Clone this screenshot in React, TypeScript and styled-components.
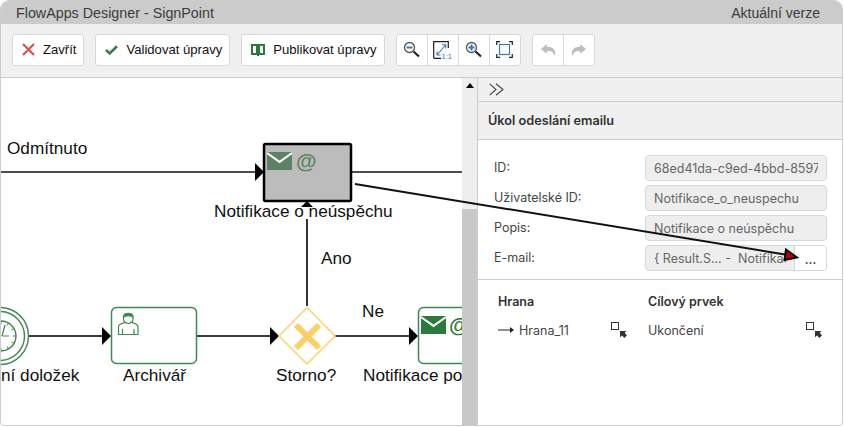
import * as React from 'react';
import styled, { createGlobalStyle } from 'styled-components';

const UI_FONT = '"Liberation Sans", Arial, sans-serif';
const PANEL_FONT = 'Inter, "Liberation Sans", sans-serif';
const GREEN = '#2a7a3b';
const BORDER = '#cdcdcd';

const GlobalStyle = createGlobalStyle`
  html, body { margin: 0; padding: 0; background: #fff; }
  body { font-family: ${UI_FONT}; overflow: hidden; }
`;

const Window = styled.div`
  position: relative;
  box-sizing: border-box;
  display: flex;
  flex-direction: column;
  width: 843px;
  height: 426px;
  border: 1px solid ${BORDER};
  border-radius: 9px 9px 4px 4px;
  overflow: hidden;
  background: #fff;
`;

const TitleBar = styled.div`
  display: flex;
  align-items: center;
  justify-content: space-between;
  flex: none;
  height: 23px;
  padding: 0 22px 0 15px;
  background: #cbcbcb;
  color: #3c3c3c;
  font-size: 14px;
`;

const AppName = styled.span`
  font-size: 14.3px;
`;

const Toolbar = styled.div`
  display: flex;
  align-items: center;
  gap: 11px;
  flex: none;
  box-sizing: border-box;
  height: 54px;
  padding: 0 0 2px 11px;
  background: #f0f0f0;
  border-bottom: 1px solid ${BORDER};
`;

const Button = styled.button`
  display: flex;
  align-items: center;
  gap: 8px;
  box-sizing: border-box;
  height: 32px;
  padding: 0 7px 0 9px;
  background: #fff;
  border: 1px solid #d8d8d8;
  border-radius: 3px;
  color: #111;
  font-family: ${UI_FONT};
  font-size: 13.1px;
`;

const Group = styled.div`
  display: flex;
  box-sizing: border-box;
  height: 32px;
  background: #fff;
  border: 1px solid #d8d8d8;
  border-radius: 3px;
`;

const GroupButton = styled.button`
  display: flex;
  align-items: center;
  justify-content: center;
  box-sizing: border-box;
  width: 31px;
  padding: 0;
  background: none;
  border: none;
  border-left: 1px solid #d8d8d8;

  &:first-child {
    width: 30px;
    border-left: none;
  }
`;

const Body = styled.div`
  display: flex;
  flex: 1;
  min-height: 0;
`;

const Canvas = styled.div`
  flex: none;
  width: 461px;
  overflow: hidden;
`;

const Scrollbar = styled.div`
  flex: none;
  display: flex;
  flex-direction: column;
  width: 15px;
  background: #eeeeee;
`;

const ScrollArrow = styled.div`
  align-self: center;
  margin-top: 5px;
  width: 0;
  height: 0;
  border-left: 4px solid transparent;
  border-right: 4px solid transparent;
  border-bottom: 5px solid #000;
`;

const ScrollThumb = styled.div`
  margin-top: auto;
  height: 216px;
  background: #c8c8c8;
`;

const Panel = styled.div`
  flex: 1;
  min-width: 0;
  border-left: 1px solid ${BORDER};
  color: #333;
  font-family: ${PANEL_FONT};
  font-size: 12.5px;
`;

const CollapseRow = styled.div`
  display: flex;
  align-items: center;
  box-sizing: border-box;
  height: 24px;
  padding-left: 11px;
  background: #f0f0f0;
  border-bottom: 1px solid ${BORDER};
`;

const PanelHeading = styled.div`
  display: flex;
  align-items: center;
  box-sizing: border-box;
  height: 38px;
  padding-left: 10px;
  background: #f0f0f0;
  border-bottom: 1px solid ${BORDER};
  font-size: 12.7px;
  font-weight: 600;
`;

const Form = styled.div`
  display: grid;
  grid-template-columns: 151px 182px;
  row-gap: 4px;
  padding: 15px 0 8px 16px;
  border-bottom: 1px solid ${BORDER};
`;

const FieldLabel = styled.div`
  align-self: center;
  margin-top: -2px;
  color: #444;
`;

const Field = styled.div`
  display: flex;
  align-items: center;
  box-sizing: border-box;
  height: 26px;
  padding-left: 8px;
  background: #eeeeee;
  border: 1px solid #d8d8d8;
  border-radius: 4px;
  color: #666;
  white-space: pre;
  overflow: hidden;
`;

const FieldText = styled.span`
  flex: 1;
  min-width: 0;
  margin-right: 8px;
  overflow: hidden;
`;

const PickButton = styled.span`
  flex: none;
  display: flex;
  align-items: center;
  justify-content: center;
  box-sizing: border-box;
  width: 32px;
  height: 100%;
  padding-top: 3px;
  background: #fff;
  border-left: 1px solid #d8d8d8;
  color: #222;
  font-weight: 600;
  font-size: 12px;
`;

const EdgeTable = styled.div`
  display: grid;
  grid-template-columns: 113px 37px 158px 16px;
  padding: 14px 0 0 20px;
`;

const HeadCell = styled.div`
  font-weight: 600;
  height: 28px;
  grid-column: span ${(props: { $span?: number }) => props.$span || 1};
`;

const Cell = styled.div`
  display: flex;
  align-items: center;
  gap: 5px;
  height: 16px;
  color: #444;
`;

const LineLayer = styled.svg`
  position: absolute;
  left: -1px;
  top: -1px;
  pointer-events: none;
`;

const DiagramText = styled.text`
  font-family: ${UI_FONT};
  font-size: 17.2px;
  fill: #111;
`;

const CloseIcon = () => (
  <svg width="13" height="13" viewBox="0 0 13 13">
    <path d="M1 1 L12 12 M12 1 L1 12" stroke="#d9534f" strokeWidth="2.2" fill="none" />
  </svg>
);

const CheckIcon = () => (
  <svg width="13" height="10" viewBox="0 0 13 10">
    <path d="M1 5 L4.7 8.4 L12 1.3" stroke="#3b7d52" strokeWidth="2.6" fill="none" />
  </svg>
);

const BookIcon = () => (
  <svg width="14" height="12" viewBox="0 0 14 12">
    <path d="M1 1 H6 V10 H1 Z M8 1 H13 V10 H8 Z" stroke="#2a7a3b" strokeWidth="2" fill="none" />
    <path d="M6 10 H8 V12 H6 Z" fill="#2a7a3b" />
  </svg>
);

const Magnifier = ({ plus }: { plus?: boolean }) => (
  <svg width="17" height="17" viewBox="0 0 17 17">
    <circle cx="6.5" cy="6.5" r="5" fill="#fff" stroke="#555" strokeWidth="1.3" />
    <path d="M10.5 10.5 L16 15.5" stroke="#222" strokeWidth="2.2" />
    <path d="M3.5 6.5 H9.5" stroke="#3a76b8" strokeWidth="2" />
    {plus && <path d="M6.5 3.5 V9.5" stroke="#3a76b8" strokeWidth="2" />}
  </svg>
);

const ActualSizeIcon = () => (
  <svg width="19" height="18" viewBox="0 0 19 18">
    <path d="M0.7 17.3 V0.7 H15.3 V7 M0.7 17.3 H8" stroke="#222" strokeWidth="1.2" fill="none" />
    <path d="M4 14 L12.5 4 M9 3.8 H12.8 V7.6 M4 10.5 V14 H7.5" stroke="#3a76b8" strokeWidth="1.1" fill="none" />
    <text x="8.5" y="17.5" fontFamily={UI_FONT} fontSize="7.5" fill="#3a76b8">1:1</text>
  </svg>
);

const FitIcon = () => (
  <svg width="17" height="17" viewBox="0 0 17 17">
    <path d="M0.7 4 V0.7 H4 M13 0.7 H16.3 V4 M16.3 13 V16.3 H13 M4 16.3 H0.7 V13" stroke="#222" strokeWidth="1.2" fill="none" />
    <rect x="3.5" y="3.5" width="10" height="10" stroke="#3a76b8" strokeWidth="1.2" fill="none" />
  </svg>
);

const UndoIcon = ({ flip }: { flip?: boolean }) => (
  <svg width="16" height="12" viewBox="0 0 16 12" style={flip ? { transform: 'scaleX(-1)' } : undefined}>
    <path d="M6.5 1 L1.5 5 L6.5 9 V6.5 H9 C12 6.5 13.5 8 14.5 11 C15.5 6.5 13 3.5 9 3.5 H6.5 Z" fill="#bdbdbd" stroke="#bdbdbd" />
  </svg>
);

const CollapseIcon = () => (
  <svg width="15" height="13" viewBox="0 0 15 13">
    <path d="M0.7 0.8 L7 6.5 L0.7 12.2 M7 0.8 L14 6.5 L7 12.2" stroke="#444" strokeWidth="1.1" fill="none" />
  </svg>
);

const LinkIcon = () => (
  <svg width="16" height="16" viewBox="0 0 16 16">
    <rect x="0.5" y="0.5" width="7" height="7" fill="#fff" stroke="#333" strokeWidth="1" />
    <path d="M9 9 H15.5 L13.7 10.8 L16 13.2 L13.4 16 L11 13.5 L9 15.3 Z" fill="#333" />
  </svg>
);

const SmallArrow = () => (
  <svg width="16" height="8" viewBox="0 0 16 8">
    <path d="M0 4 H13" stroke="#222" strokeWidth="1" />
    <path d="M12 1 L16 4 L12 7 Z" fill="#222" />
  </svg>
);

const Envelope = ({ x, y, w, h, color }: { x: number; y: number; w: number; h: number; color: string }) => (
  <g>
    <rect x={x} y={y} width={w} height={h} fill={color} />
    <path d={`M${x} ${y + 1} L${x + w / 2} ${y + h * 0.55} L${x + w} ${y + 1}`} stroke="#fff" strokeWidth="2" fill="none" />
  </g>
);

const Head = ({ x, y }: { x: number; y: number }) => (
  <path d={`M${x - 9} ${y - 9} L${x} ${y} L${x - 9} ${y + 9} Z`} fill="#000" />
);

const ticks = Array.from({ length: 12 }, (_, i) => (i * Math.PI) / 6);

const Diagram = () => (
  <svg width="461" height="347" viewBox="1 78 461 347" style={{ display: 'block' }}>
    <DiagramText x="7" y="154">Odmítnuto</DiagramText>
    <path d="M1 172 H256" stroke="#111" strokeWidth="1.5" />
    <path d="M351 172 H462" stroke="#111" strokeWidth="1.5" />
    <Head x={264} y={172} />
    <rect x="264" y="144" width="87" height="57" rx="1.5" fill="#bcbcbc" stroke="#000" strokeWidth="2.5" />
    <Envelope x={267} y={152} w={25} h={18} color="#5b8263" />
    <text x="296" y="168" fontFamily={UI_FONT} fontSize="21" fontWeight="700" fill="#5b8263">@</text>

    <path d="M307 306 V206" stroke="#333" strokeWidth="2" />
    <path d="M298 210 L307 201 L316 210 Z" fill="#000" />
    <rect x="214" y="207" width="180" height="12" fill="#fff" />
    <DiagramText x="214" y="217">Notifikace o neúspěchu</DiagramText>
    <DiagramText x="321" y="264">Ano</DiagramText>
    <DiagramText x="362" y="317">Ne</DiagramText>

    <path d="M29 336 H103 M197 336 H271 M335 336 H409" stroke="#3c3c3c" strokeWidth="2" />
    <Head x={111} y={336} />
    <Head x={279} y={336} />
    <Head x={418} y={336} />

    <g fill="none" stroke={GREEN} strokeOpacity="0.9">
      <circle cx="0" cy="336" r="28.5" strokeWidth="1.4" />
      <circle cx="0" cy="336" r="24.5" strokeWidth="1.4" />
      <circle cx="1" cy="336" r="15" strokeWidth="1.4" />
      {ticks.map((a) => (
        <path key={a} d={`M${1 + Math.cos(a) * 12} ${336 + Math.sin(a) * 12} L${1 + Math.cos(a) * 15} ${336 + Math.sin(a) * 15}`} strokeWidth="1" />
      ))}
      <path d="M2 336 H9 M2 336 L5 325" strokeWidth="1.2" />
    </g>
    <DiagramText x="1" y="381">ní doložek</DiagramText>

    <rect x="111.5" y="307.5" width="85" height="56" rx="5" fill="#fff" stroke="#3b8a52" strokeWidth="1.5" />
    <g fill="none" stroke="#3b8a52" strokeWidth="1.2">
      <path d="M118.5 334.5 V327 C118.5 324 122 323.5 125 322.5 H132 C135 323.5 138 324 138 327 V334.5 Z" fill="#fff" />
      <path d="M122.5 329 V334 M134 329 V334" />
      <ellipse cx="128.3" cy="318.5" rx="4.8" ry="5" fill="#fff" />
      <path d="M123.5 317 C123.5 312 133 312 133 317 C130 315.5 126 315.5 123.5 317 Z" fill="#3b8a52" />
    </g>
    <DiagramText x="123" y="381">Archivář</DiagramText>

    <path d="M307 307.5 L335 336 L307 364 L279 336 Z" fill="#fff" stroke="#fdd26f" strokeWidth="1.5" />
    <path d="M296 325 L319 348 M319 325 L296 348" stroke="#fbcf66" strokeWidth="6" />
    <DiagramText x="276" y="381">Storno?</DiagramText>

    <rect x="418.5" y="307.5" width="85" height="56" rx="5" fill="#fff" stroke="#3b8a52" strokeWidth="1.5" />
    <Envelope x={421} y={316} w={25} h={18} color={GREEN} />
    <text x="449" y="332" fontFamily={UI_FONT} fontSize="21" fontWeight="700" fill={GREEN}>@</text>
    <DiagramText x="363" y="381">Notifikace po</DiagramText>
  </svg>
);

export default function App() {
  return (
    <>
      <GlobalStyle />
      <Window>
        <TitleBar>
          <AppName>FlowApps Designer - SignPoint</AppName>
          <span>Aktuální verze</span>
        </TitleBar>
        <Toolbar>
          <Button><CloseIcon />Zavřít</Button>
          <Button><CheckIcon />Validovat úpravy</Button>
          <Button><BookIcon />Publikovat úpravy</Button>
          <Group>
            <GroupButton><Magnifier /></GroupButton>
            <GroupButton><ActualSizeIcon /></GroupButton>
            <GroupButton><Magnifier plus /></GroupButton>
            <GroupButton><FitIcon /></GroupButton>
          </Group>
          <Group>
            <GroupButton><UndoIcon /></GroupButton>
            <GroupButton><UndoIcon flip /></GroupButton>
          </Group>
        </Toolbar>
        <Body>
          <Canvas><Diagram /></Canvas>
          <Scrollbar>
            <ScrollArrow />
            <ScrollThumb />
          </Scrollbar>
          <Panel>
            <CollapseRow><CollapseIcon /></CollapseRow>
            <PanelHeading>Úkol odeslání emailu</PanelHeading>
            <Form>
              <FieldLabel>ID:</FieldLabel>
              <Field><FieldText>68ed41da-c9ed-4bbd-8597-</FieldText></Field>
              <FieldLabel>Uživatelské ID:</FieldLabel>
              <Field><FieldText>Notifikace_o_neuspechu</FieldText></Field>
              <FieldLabel>Popis:</FieldLabel>
              <Field><FieldText>Notifikace o neúspěchu</FieldText></Field>
              <FieldLabel>E-mail:</FieldLabel>
              <Field>
                <FieldText>{'{ Result.S... -  Notifikace'}</FieldText>
                <PickButton>...</PickButton>
              </Field>
            </Form>
            <EdgeTable>
              <HeadCell $span={2}>Hrana</HeadCell>
              <HeadCell $span={2}>Cílový prvek</HeadCell>
              <Cell><SmallArrow />Hrana_11</Cell>
              <Cell><LinkIcon /></Cell>
              <Cell>Ukončení</Cell>
              <Cell><LinkIcon /></Cell>
            </EdgeTable>
          </Panel>
        </Body>
        <LineLayer width="844" height="427" viewBox="0 0 844 427">
          <path d="M355 184 L788 255" stroke="#111" strokeWidth="2" />
          <path d="M786 249.5 L797 257.5 L784.5 260 Z" fill="#c00000" stroke="#000" strokeWidth="2" />
        </LineLayer>
      </Window>
    </>
  );
}
